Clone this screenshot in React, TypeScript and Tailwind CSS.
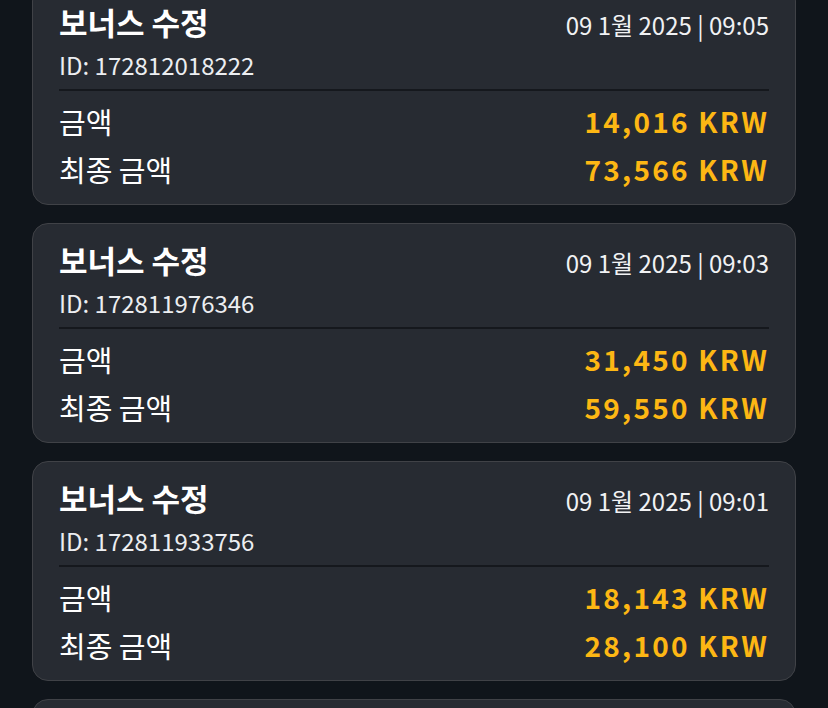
import * as React from "react";

interface Tx {
    id: string;
    date: string;
    amount: string;
    total: string;
}

const items: Tx[] = [
    { id: "172812018222", date: "09 1월 2025 | 09:05", amount: "14,016 KRW", total: "73,566 KRW" },
    { id: "172811976346", date: "09 1월 2025 | 09:03", amount: "31,450 KRW", total: "59,550 KRW" },
    { id: "172811933756", date: "09 1월 2025 | 09:01", amount: "18,143 KRW", total: "28,100 KRW" },
    { id: "172811890012", date: "09 1월 2025 | 08:59", amount: "12,200 KRW", total: "9,957 KRW" },
];

// ─── Single bonus card ───────────────────────────────────────────────────────
function BonusCard({ tx }: { tx: Tx }) {
    return (
        <div className="rounded-2xl border border-[#404247] bg-[#272b32] px-[26px] pt-[18px] pb-[17px]">
            <div className="flex items-start justify-between">
                <h3 className="text-[31px] leading-[36px] font-bold text-white">보너스 수정</h3>
                <span className="pt-[6px] text-[24px] leading-[30px] text-[#f1f2f4]">{tx.date}</span>
            </div>
            <p className="mt-[9px] text-[24px] leading-[32px] text-[#eceef1]">ID: {tx.id}</p>
            <div className="mt-[8px] h-[2px] bg-[#15181d]" />
            <div className="mt-[12px] flex flex-col gap-[12px]">
                <div className="flex items-center justify-between">
                    <span className="text-[29px] leading-[36px] text-white">금액</span>
                    <span className="text-[28px] leading-[36px] font-bold tracking-[0.08em] text-[#fdb714]">
                        {tx.amount}
                    </span>
                </div>
                <div className="flex items-center justify-between">
                    <span className="text-[29px] leading-[36px] text-white">최종 금액</span>
                    <span className="text-[28px] leading-[36px] font-bold tracking-[0.08em] text-[#fdb714]">
                        {tx.total}
                    </span>
                </div>
            </div>
        </div>
    );
}

export default function App() {
    return (
        <div
            className="h-[708px] w-full overflow-hidden bg-[#10151b] px-8"
            style={{ fontFamily: '"Noto Sans CJK KR", "Noto Sans", sans-serif' }}
        >
            <div className="mt-[-15px] flex flex-col gap-[18px]">
                {items.map((tx) => (
                    <BonusCard key={tx.id} tx={tx} />
                ))}
            </div>
        </div>
    );
}
